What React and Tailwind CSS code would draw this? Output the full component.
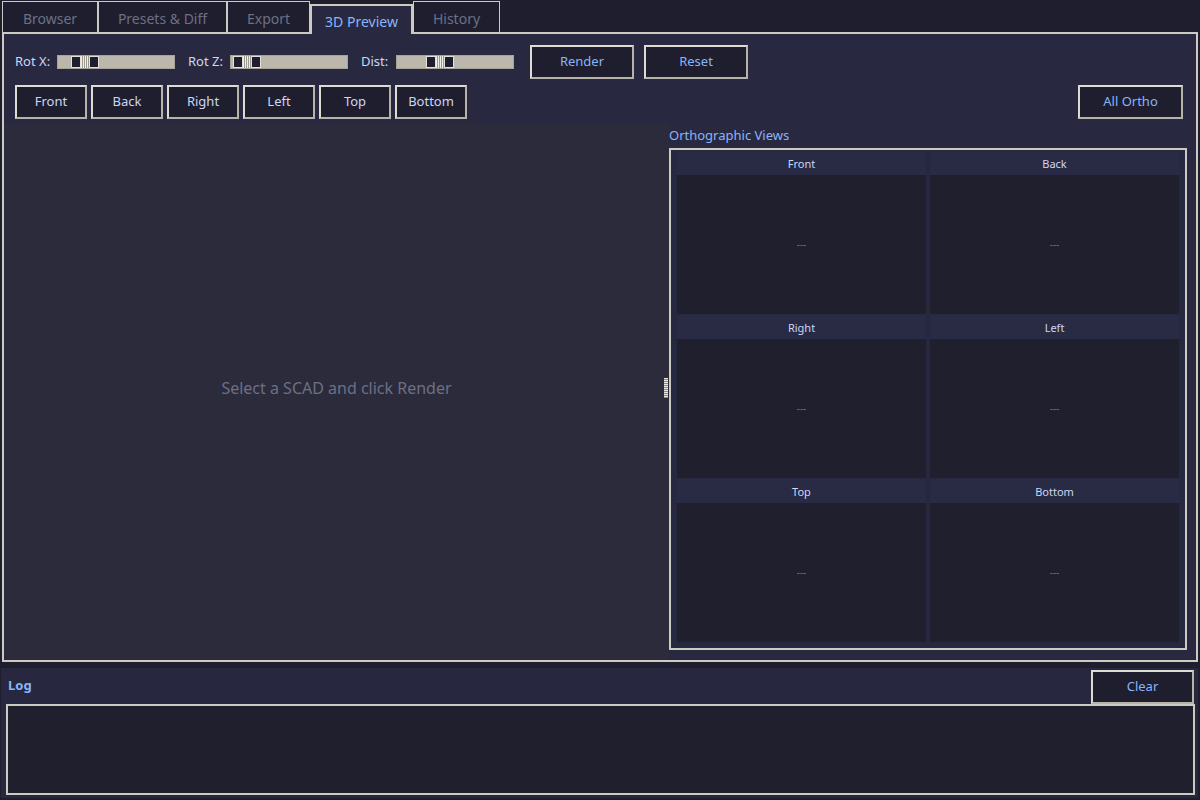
import React from 'react';

const tabs = [
  { label: 'Browser', w: 'w-[96px]' },
  { label: 'Presets & Diff', w: 'w-[129px]' },
  { label: 'Export', w: 'w-[83px]' },
  { label: '3D Preview', w: 'w-[103px]', active: true },
  { label: 'History', w: 'w-[87px]' },
];

const views = ['Front', 'Back', 'Right', 'Left', 'Top', 'Bottom'];

// Tk-style horizontal scale with a gripped thumb
const Scale = ({ offset }) => (
  <div className="w-[118px] h-[14px] bg-[#bbb7ac] border border-[#a7a398] flex items-center">
    <div className="flex h-[12px]" style={{ marginLeft: offset }}>
      <div className="w-[10px] h-full bg-[#1e1e2e] border border-[#e4e1d9]" />
      <div className="w-[8px] h-full bg-[repeating-linear-gradient(90deg,#efede7_0_1px,#9d998f_1px_2px)]" />
      <div className="w-[10px] h-full bg-[#1e1e2e] border border-[#e4e1d9]" />
    </div>
  </div>
);

const TkButton = ({ children, className = '', text = 'text-[#89b4fa]' }) => (
  <button
    className={`h-[34px] bg-[#1e1e2e] border-2 border-t-[#dedbd3] border-l-[#dedbd3] border-r-[#b7b3a9] border-b-[#b7b3a9] text-[13px] ${text} flex items-center justify-center ${className}`}
  >
    {children}
  </button>
);

const OrthoCell = ({ name }) => (
  <div className="flex flex-col">
    <div className="h-[24px] bg-[#292a44] flex items-center justify-center pt-[2px] text-[11px] text-[#cdd6f4]">
      {name}
    </div>
    <div className="h-[139px] mb-[1px] bg-[#1f1f2e] flex items-center justify-center text-[10px] text-[#6c7086]">
      ---
    </div>
  </div>
);

export default function App() {
  return (
    <div
      className="w-[1200px] h-[800px] bg-[#1e1e2e] flex flex-col overflow-hidden"
      style={{ fontFamily: '"Noto Sans", "Open Sans", sans-serif' }}
    >
      {/* Notebook tabs */}
      <div className="h-[34px] -mb-[2px] pl-[2px] flex items-start relative z-10">
        {tabs.map((t) =>
          t.active ? (
            <div
              key={t.label}
              className={`${t.w} mt-[4px] h-[30px] bg-[#282941] border-2 border-b-0 border-[#cdcac2] flex items-center justify-center pt-[2px] text-[14px] text-[#89b4fa]`}
            >
              {t.label}
            </div>
          ) : (
            <div
              key={t.label}
              className={`${t.w} mt-[1px] h-[31px] bg-[#1e1e2e] border border-b-0 border-[#cdcac2] flex items-center justify-center pt-[3px] text-[14px] text-[#6c7086]`}
            >
              {t.label}
            </div>
          )
        )}
      </div>

      {/* 3D preview panel */}
      <div className="ml-[2px] w-[1196px] h-[630px] border-2 border-[#cdcac2] bg-[#282941] flex flex-col">
        {/* Camera controls */}
        <div className="mt-[11px] pl-[11px] h-[34px] flex items-center text-[13px] text-[#cdd6f4]">
          <span className="w-[42px]">Rot X:</span>
          <Scale offset={13} />
          <span className="ml-[13px] w-[42px]">Rot Z:</span>
          <Scale offset={2} />
          <span className="ml-[13px] w-[35px]">Dist:</span>
          <Scale offset={29} />
          <TkButton className="ml-[16px] w-[104px]">Render</TkButton>
          <TkButton className="ml-[10px] w-[104px]">Reset</TkButton>
        </div>

        {/* Preset views */}
        <div className="mt-[6px] pl-[11px] pr-[13px] flex items-center gap-[4px]">
          {views.map((v) => (
            <TkButton key={v} className="w-[72px]" text="text-[#cdd6f4]">
              {v}
            </TkButton>
          ))}
          <TkButton className="ml-auto w-[105px]">All Ortho</TkButton>
        </div>

        <div className="mt-[4px] flex-1 flex min-h-0">
          {/* Render canvas */}
          <div className="w-[665px] bg-[#2b2b3b] relative flex items-center justify-center">
            <span className="text-[16px] text-[#6c7086] pb-[8px]">Select a SCAD and click Render</span>
            <div className="absolute right-[1px] top-[255px] w-[4px] h-[20px] bg-[repeating-linear-gradient(180deg,#e9e7e0_0_1px,#8f8b82_1px_2px)]" />
          </div>

          {/* Orthographic views */}
          <div className="flex-1 flex flex-col">
            <div className="h-[25px] flex items-center text-[13px] text-[#89b4fa]">Orthographic Views</div>
            <div className="w-[518px] h-[502px] border-2 border-[#cdcac2] bg-[#262840] pt-[1px] px-[6px]">
              <div className="grid grid-cols-2 gap-x-[4px]">
                {views.map((v) => (
                  <OrthoCell key={v} name={v} />
                ))}
              </div>
            </div>
          </div>
        </div>
      </div>

      {/* Log */}
      <div className="mt-[6px] ml-[1px] w-[1197px] h-[130px] bg-[#272840] flex flex-col">
        <div className="h-[36px] flex items-start">
          <span className="ml-[7px] mt-[8px] text-[13px] font-bold text-[#89b4fa]">Log</span>
          <TkButton className="ml-auto mr-[4px] mt-[2px] w-[103px]">Clear</TkButton>
        </div>
        <div className="ml-[5px] w-[1189px] h-[91px] border-2 border-[#cdcac2] bg-[#1f1f2e]" />
      </div>
    </div>
  );
}
